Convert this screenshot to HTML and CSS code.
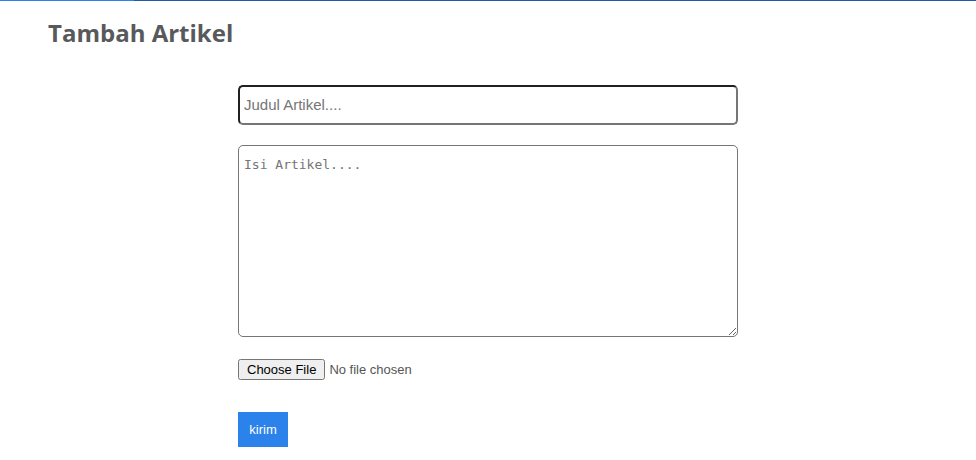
FILE: index.html
```html
<!DOCTYPE html>
<html lang="id">
<head>
<meta charset="utf-8">
<title>Tambah Artikel</title>
<link rel="stylesheet" href="styles.css">
</head>
<body>
<div class="topbar"><span class="topbar-active"></span></div>
<main class="page">
  <h1 class="title">Tambah Artikel</h1>
  <form class="form">
    <input class="field" type="text" aria-label="Judul Artikel" placeholder="Judul Artikel....">
    <textarea class="field area" aria-label="Isi Artikel" placeholder="Isi Artikel...."></textarea>
    <input class="file" type="file" aria-label="Gambar">
    <button class="submit" type="submit">kirim</button>
  </form>
</main>
</body>
</html>
```
FILE: styles.css
```css
* { box-sizing: border-box; }
body { margin: 0; background: #fff; color: #555; font-family: "Open Sans", sans-serif; }
.topbar { height: 1px; background: #1f5ca8; }
.topbar-active { display: block; width: 134px; height: 1px; background: #2b82ea; }
.page { padding: 16px 48px; }
.title { margin: 0; font-size: 24px; line-height: 32px; font-weight: 700; color: #58595b; }
.form { display: flex; flex-direction: column; align-items: flex-start; max-width: 500px; margin: 36px auto 0; }
.field { width: 100%; border-radius: 5px; padding: 4px; background: #fff; }
.field::placeholder { color: #757575; }
input.field { height: 40px; padding-bottom: 6px; border: 2px inset #767676; font: 15px "Liberation Sans", sans-serif; }
.area { height: 192px; margin-top: 20px; padding: 11px 5px; border: 1px solid #767676; font: 13px/16px "DejaVu Sans Mono", monospace; resize: vertical; }
.file { margin-top: 22px; color: #555; font: 13px "Liberation Sans", sans-serif; }
.file::file-selector-button { padding: 1px 7px; }
.submit { margin-top: 32px; height: 35px; min-width: 50px; padding: 0 10px; border: 0; background: #2b82ea; color: #fff; font: 13px "Liberation Sans", sans-serif; }
```
